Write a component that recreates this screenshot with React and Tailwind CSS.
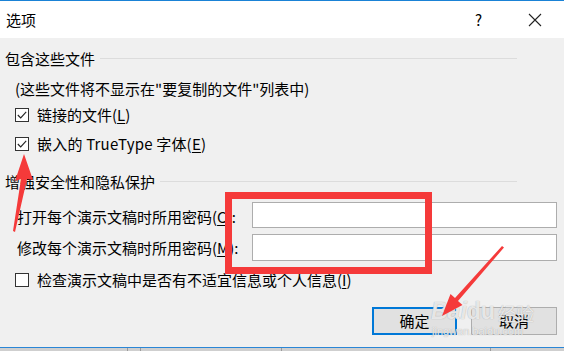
export default function App() {
  const font = { fontFamily: '"Noto Sans CJK SC", "Noto Sans", sans-serif' };
  const Check = ({ checked }) => (
    <div className="w-[14px] h-[14px] border border-[#333] bg-white flex items-center justify-center shrink-0">
      {checked && (
        <svg width="12" height="12" viewBox="0 0 12 12">
          <path d="M1.8 6 L4.7 8.9 L10.2 2.8" fill="none" stroke="#222" strokeWidth="1.1" />
        </svg>
      )}
    </div>
  );
  const U = ({ c }) => <span className="underline underline-offset-2">{c}</span>;
  return (
    <div className="relative w-[564px] h-[351px] overflow-hidden bg-[#f0f0f0] text-[15px] text-black leading-[20px]" style={font}>
      {/* title bar */}
      <div className="h-[38px] bg-white border-t border-[#1a82d6] flex items-center">
        <span className="ml-[6px] mt-[1px]">选项</span>
        <span className="ml-auto mr-[46px] text-[15px]">?</span>
        <svg className="mr-[22px]" width="14" height="14" viewBox="0 0 14 14">
          <path d="M1 1 L13 13 M13 1 L1 13" stroke="#222" strokeWidth="1.1" />
        </svg>
      </div>
      {/* body */}
      <div className="flex flex-col">
        <div className="h-[20px] mt-[11px] flex items-center pl-[5px] pr-[47px]">
          <span>包含这些文件</span>
          <div className="flex-1 h-px bg-[#dcdcdc] ml-[5px] -mt-[2px]"></div>
        </div>
        <div className="h-[20px] mt-[10px] flex items-center pl-[15px]">
          <span>(这些文件将不显示在"要复制的文件"列表中)</span>
        </div>
        <div className="h-[20px] mt-[6px] flex items-center pl-[15px] gap-[8px]">
          <Check checked />
          <span>链接的文件(<U c="L" />)</span>
        </div>
        <div className="h-[20px] mt-[9px] flex items-center pl-[15px] gap-[8px]">
          <Check checked />
          <span className="tracking-[0.2px]">嵌入的 TrueType 字体(<U c="E" />)</span>
        </div>
        <div className="h-[20px] mt-[18px] flex items-center pl-[5px] pr-[47px]">
          <span>增强安全性和隐私保护</span>
          <div className="flex-1 h-px bg-[#dcdcdc] ml-[5px] -mt-[2px]"></div>
        </div>
        <div className="h-[26px] mt-[10px] flex items-center justify-between pl-[17px] pr-[7px]">
          <span className="mt-[3px]">打开每个演示文稿时所用密码(<U c="C" />):</span>
          <div className="w-[305px] h-[26px] bg-white border border-[#adadad]"></div>
        </div>
        <div className="h-[27px] mt-[6px] flex items-center justify-between pl-[17px] pr-[7px]">
          <span>修改每个演示文稿时所用密码(<U c="M" />):</span>
          <div className="w-[305px] h-[27px] bg-white border border-[#adadad]"></div>
        </div>
        <div className="h-[20px] mt-[9px] flex items-center pl-[15px] gap-[8px]">
          <Check />
          <span>检查演示文稿中是否有不适宜信息或个人信息(<U c="I" />)</span>
        </div>
        <div className="h-[28px] mt-[17px] flex justify-end pr-[7px] gap-[14px]">
          <div className="w-[85px] h-[28px] bg-[#e1e1e1] border-2 border-[#0078d7] flex items-center justify-center">确定</div>
          <div className="w-[86px] h-[28px] bg-[#e1e1e1] border border-[#adadad] flex items-center justify-center">取消</div>
        </div>
        <div className="mt-[12px] h-[4px] border-t border-[#2a86d6] bg-[#cfcfcf] flex">
          <div className="w-[128px] border-r border-[#9a9a9a]"></div>
          <div className="w-[13px] border-r border-[#9a9a9a]"></div>
          <div className="w-[141px] border-r border-[#9a9a9a]"></div>
          <div className="w-[209px] border-r border-[#9a9a9a]"></div>
        </div>
      </div>

      {/* watermark */}
      <div className="absolute left-[431px] top-[300px] flex items-end text-[#ffffffc0] [text-shadow:0_0_1px_#9a9a9a] leading-none pointer-events-none" style={{ fontFamily: '"Liberation Sans", sans-serif' }}>
        <span className="text-[23px] font-bold italic">Bai</span>
        <span className="text-[23px] font-bold">du</span>
        <span className="text-[18px] ml-[3px] mb-[1px]" style={font}>经验</span>
      </div>
      <div className="absolute left-[432px] top-[326px] text-[11px] leading-none text-[#ffffffc0] [text-shadow:0_0_1px_#9a9a9a] pointer-events-none" style={{ fontFamily: '"Liberation Sans", sans-serif' }}>
        jingwan.baidu.com
      </div>

      {/* red annotation box */}
      <div className="absolute left-[225px] top-[192px] w-[207px] h-[82px] border-[7px] border-[#f53a3a]"></div>

      {/* red arrows */}
      <svg className="absolute left-0 top-0 pointer-events-none" width="564" height="351" viewBox="0 0 564 351">
        <polygon points="24,154 33,180 27,179 15,232 13,231 21,179 15,181" fill="#f53a3a" />
        <polygon points="442,316 450.5,294 455,298 502,246 504,247.5 458,301 462.5,305" fill="#f53a3a" />
      </svg>
    </div>
  );
}
